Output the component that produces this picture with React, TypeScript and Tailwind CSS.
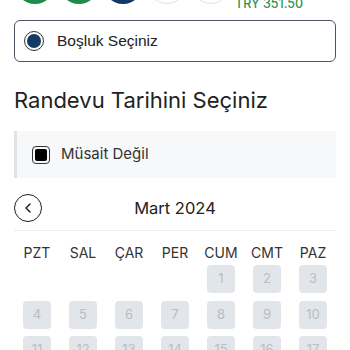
import React from "react";

const days = ["PZT", "SAL", "ÇAR", "PER", "CUM", "CMT", "PAZ"];

export default function App() {
  const cells: (number | null)[] = [null, null, null, null, 1, 2, 3];
  for (let i = 4; i <= 17; i++) cells.push(i);
  return (
    <div
      className="w-[350px] h-[350px] overflow-hidden bg-white px-[14px]"
      style={{ fontFamily: "Inter, 'Noto Sans', sans-serif" }}
    >
      <div className="-mt-[36px] h-[40px] flex gap-[4px] pl-[1px]">
        <div className="w-[40px] h-[40px] rounded-full bg-[#1f8a4c] shrink-0" />
        <div className="w-[40px] h-[40px] rounded-full bg-[#1f8a4c] shrink-0" />
        <div className="w-[40px] h-[40px] rounded-full bg-[#143a63] shrink-0" />
        <div className="w-[40px] h-[40px] rounded-full bg-white border border-[#e3e3e3] shrink-0" />
        <div className="w-[40px] h-[40px] rounded-full bg-white border border-[#e3e3e3] shrink-0" />
        <div className="mt-[32px] ml-0 text-[12.5px] leading-[16px] font-medium text-[#2f9457] whitespace-nowrap">
          TRY 351.50
        </div>
      </div>

      <div className="mt-[16px] h-[42px] rounded-[6px] border border-[#4b5563] flex items-center pl-[9px]">
        <div className="w-[20px] h-[20px] rounded-full border-[1.5px] border-[#333] flex items-center justify-center">
          <div className="w-[14px] h-[14px] rounded-full bg-[#153a66]" />
        </div>
        <span
          className="ml-[13px] text-[15.5px] text-[#222]"
          style={{ fontFamily: "'Liberation Sans', Arial, sans-serif" }}
        >
          Boşluk Seçiniz
        </span>
      </div>

      <div className="mt-[24px] text-[22px] leading-[28px] text-[#222]">Randevu Tarihini Seçiniz</div>

      <div className="mt-[17px] h-[47px] bg-[#f7f8fa] border-l-[3px] border-[#e2e2e2] flex items-center pl-[15px]">
        <div className="w-[18px] h-[18px] rounded-[4px] border-[1.5px] border-[#333] flex items-center justify-center">
          <div className="w-[12px] h-[12px] rounded-[2px] bg-black" />
        </div>
        <span className="ml-[11px] text-[15px] text-[#333]">Müsait Değil</span>
      </div>

      <div className="mt-[16px] pb-[8px] border-b border-[#ececec] grid grid-cols-[28px_1fr_28px] items-center">
        <div className="w-[28px] h-[28px] rounded-full border-[1.5px] border-[#222] flex items-center justify-center">
          <svg width="16" height="16" viewBox="0 0 24 24" fill="none" stroke="#222" strokeWidth="2.2" strokeLinecap="round" strokeLinejoin="round">
            <path d="M15 18l-6-6 6-6" />
          </svg>
        </div>
        <div className="text-center text-[16.5px] text-[#222]">Mart 2024</div>
        <div />
      </div>

      <div className="mt-[12px] grid grid-cols-7 text-center text-[14px] leading-[20px] text-[#333]">
        {days.map((d) => (
          <div key={d}>{d}</div>
        ))}
      </div>

      <div className="mt-[2px] grid grid-cols-7 gap-y-[7.5px] justify-items-center">
        {cells.map((c, i) =>
          c === null ? (
            <div key={i} className="h-[28px]" />
          ) : (
            <div
              key={i}
              className="w-[28px] h-[28px] rounded-[4px] bg-[#e2e5e9] flex items-center justify-center text-[13px] text-[#b9bec4]"
            >
              {c}
            </div>
          )
        )}
      </div>
    </div>
  );
}
